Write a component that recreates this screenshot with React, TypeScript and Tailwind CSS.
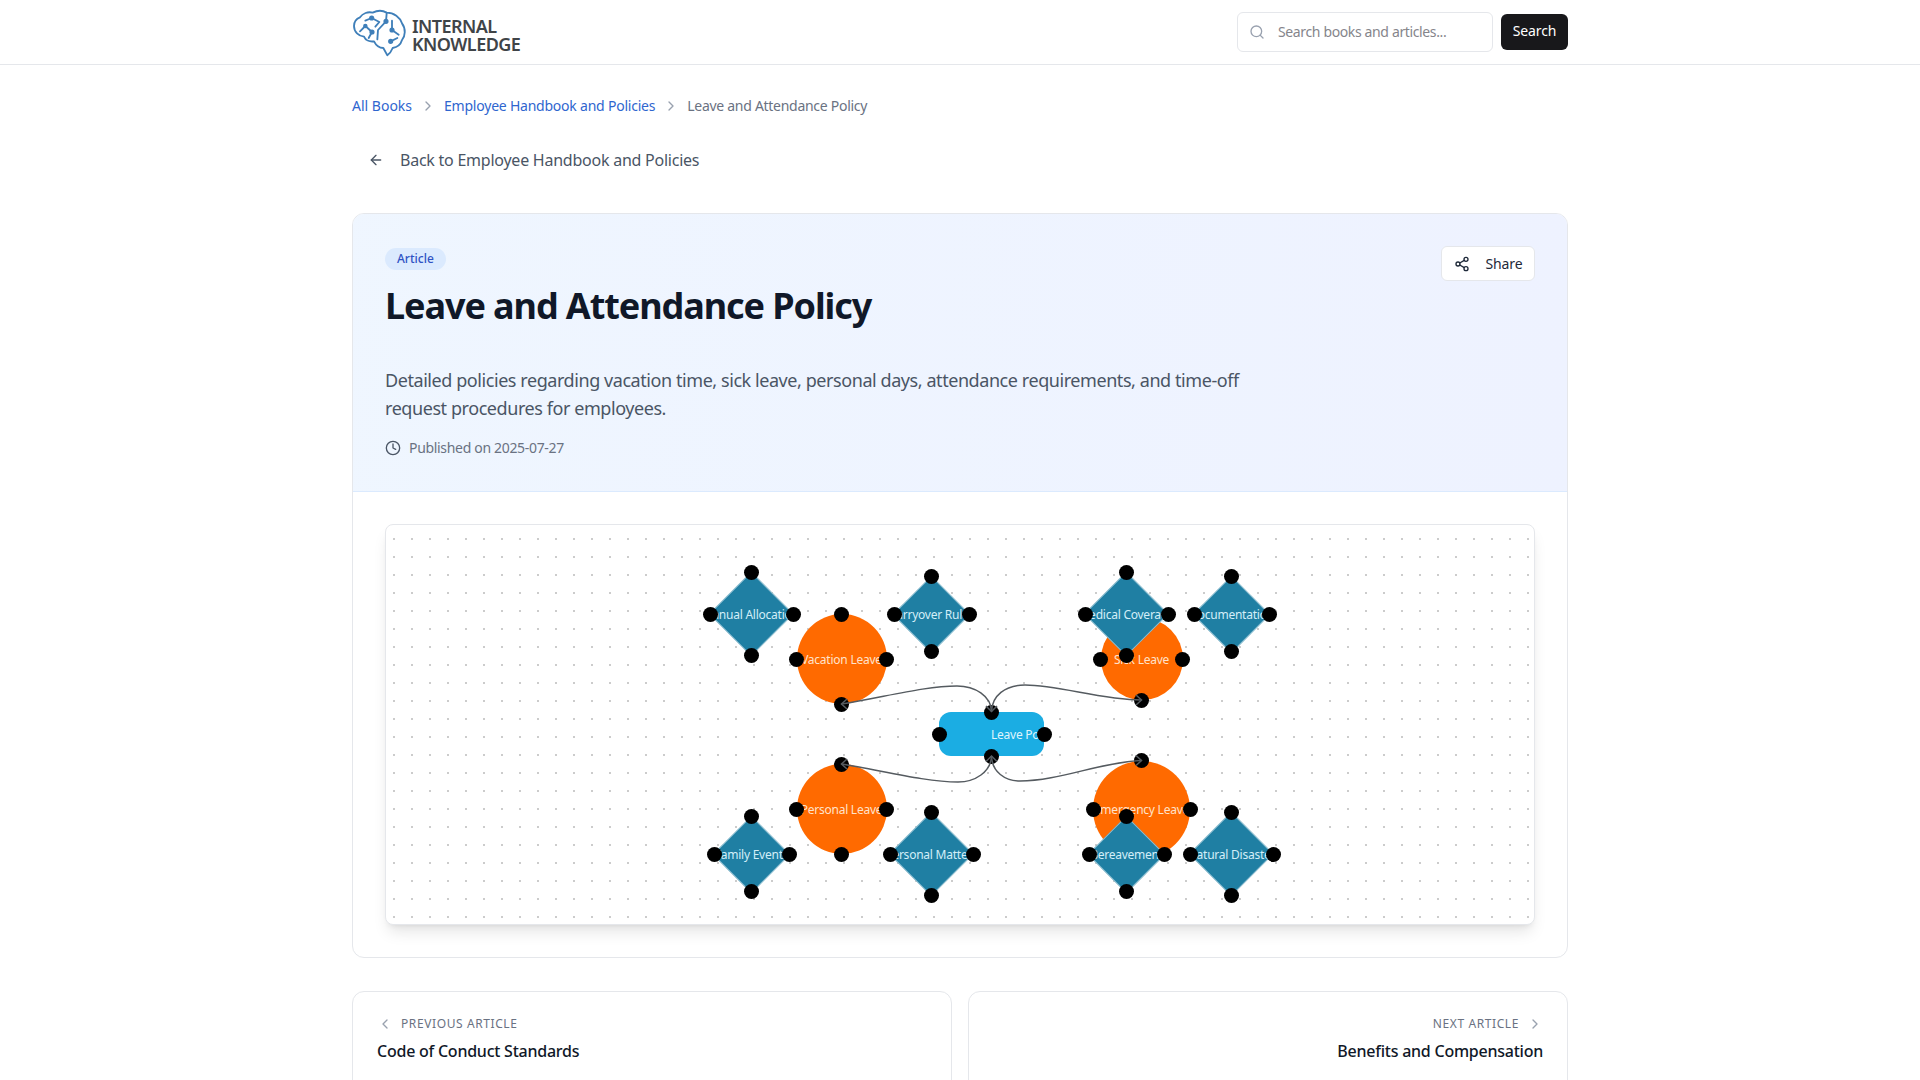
import { ArrowLeft, ChevronLeft, ChevronRight, Clock, Search, Share2 } from 'lucide-react'

const ORIGIN_X = 386
const ORIGIN_Y = 525

type FlowNode = { label: string; cx: number; cy: number; w: number; h: number }

const circles: FlowNode[] = [
  { label: 'Vacation Leave', cx: 841.5, cy: 659, w: 90, h: 90 },
  { label: 'Sick Leave', cx: 1141.5, cy: 659, w: 82, h: 82 },
  { label: 'Personal Leave', cx: 841.5, cy: 809, w: 90, h: 90 },
  { label: 'Emergency Leave', cx: 1141.5, cy: 809, w: 97, h: 97 },
]

const diamonds: FlowNode[] = [
  { label: 'Annual Allocation', cx: 751.5, cy: 614, w: 83, h: 83 },
  { label: 'Carryover Rules', cx: 931.5, cy: 614, w: 75, h: 75 },
  { label: 'Medical Coverage', cx: 1126.5, cy: 614, w: 83, h: 83 },
  { label: 'Documentation', cx: 1231.5, cy: 614, w: 75, h: 75 },
  { label: 'Family Events', cx: 751.5, cy: 854, w: 75, h: 75 },
  { label: 'Personal Matters', cx: 931.5, cy: 854, w: 83, h: 83 },
  { label: 'Bereavement', cx: 1126.5, cy: 854, w: 75, h: 75 },
  { label: 'Natural Disaster', cx: 1231.5, cy: 854, w: 83, h: 83 },
]

const policy: FlowNode = { label: 'Leave Policy', cx: 991.5, cy: 734, w: 105, h: 44 }

function boxStyle(n: FlowNode) {
  return {
    left: n.cx - n.w / 2 - ORIGIN_X,
    top: n.cy - n.h / 2 - ORIGIN_Y,
    width: n.w,
    height: n.h,
  }
}

function Handles({ node }: { node: FlowNode }) {
  const points = [
    { x: node.w / 2, y: 0 },
    { x: 0, y: node.h / 2 },
    { x: node.w, y: node.h / 2 },
    { x: node.w / 2, y: node.h },
  ]
  return (
    <>
      {points.map((p) => (
        <span
          key={`${p.x}-${p.y}`}
          className="absolute w-[15px] h-[15px] rounded-full bg-black"
          style={{ left: p.x - 7.5, top: p.y - 7.5 }}
        />
      ))}
    </>
  )
}

function LeaveDiagram() {
  const shift = (x: number, y: number) => `${x - ORIGIN_X} ${y - ORIGIN_Y}`
  return (
    <div className="relative h-[401px] rounded-lg border border-gray-200 shadow-lg overflow-hidden bg-white bg-[radial-gradient(#cccccc_0.9px,transparent_1.1px)] bg-[size:18px_18px] bg-[position:-1px_5px]">
      {circles.map((n) => (
        <div key={n.label} className="absolute" style={boxStyle(n)}>
          <div className="w-full h-full rounded-full bg-[#ff6a00] overflow-hidden flex items-center justify-center pt-[2px]">
            <span className="text-xs tracking-[-0.02em] whitespace-nowrap text-[#ffe3cc]">{n.label}</span>
          </div>
          <Handles node={n} />
        </div>
      ))}

      <div className="absolute" style={boxStyle(policy)}>
        <div className="w-full h-full rounded-xl bg-[#1badE3] overflow-hidden flex items-center pl-[52px] pt-[2px]">
          <span className="text-xs tracking-[-0.02em] whitespace-nowrap text-[#dff4fc]">{policy.label}</span>
        </div>
        <Handles node={policy} />
      </div>

      {diamonds.map((n) => (
        <div key={n.label} className="absolute" style={boxStyle(n)}>
          <div className="absolute inset-0 flex items-center justify-center">
            <div
              className="rotate-45 shrink-0 bg-[#1f7fa3] border border-white/50"
              style={{ width: (n.w + 2.5) / Math.SQRT2, height: (n.h + 2.5) / Math.SQRT2 }}
            />
          </div>
          <div className="absolute inset-0 overflow-hidden flex items-center justify-center pt-[2px]">
            <span className="text-xs tracking-[-0.02em] whitespace-nowrap text-[#d3eef8]">{n.label}</span>
          </div>
          <Handles node={n} />
        </div>
      ))}

      <svg className="absolute inset-0 w-full h-full pointer-events-none" fill="none" stroke="#555b60" strokeWidth="1.5">
        <path d={`M${shift(841.5, 704)} C${shift(885, 697)} ${shift(925, 686)} ${shift(957, 686)} C${shift(975, 686)} ${shift(991, 696)} ${shift(991.5, 711.5)}`} />
        <path d={`M${shift(991.5, 711.5)} C${shift(992, 696)} ${shift(1005, 685)} ${shift(1025, 685)} C${shift(1060, 685)} ${shift(1100, 700)} ${shift(1141.5, 700)}`} />
        <path d={`M${shift(841.5, 764)} C${shift(880, 770)} ${shift(925, 782)} ${shift(958, 782)} C${shift(975, 782)} ${shift(991, 772)} ${shift(991.5, 756)}`} />
        <path d={`M${shift(991.5, 756)} C${shift(992, 772)} ${shift(1005, 781)} ${shift(1020, 781)} C${shift(1060, 781)} ${shift(1100, 762)} ${shift(1141.5, 760.5)}`} />
        {/* arrow heads */}
        <path d={`M${shift(847, 699)} L${shift(841.5, 704)} L${shift(847, 709)}`} />
        <path d={`M${shift(986, 706)} L${shift(991.5, 711.5)} L${shift(997, 706)}`} />
        <path d={`M${shift(1136, 695)} L${shift(1141.5, 700)} L${shift(1136, 705)}`} />
        <path d={`M${shift(847, 759)} L${shift(841.5, 764)} L${shift(847, 769)}`} />
        <path d={`M${shift(986, 761.5)} L${shift(991.5, 756)} L${shift(997, 761.5)}`} />
        <path d={`M${shift(1136, 755.5)} L${shift(1141.5, 760.5)} L${shift(1136, 765.5)}`} />
      </svg>
    </div>
  )
}

function BrainLogo() {
  return (
    <svg viewBox="0 0 180 162" className="w-[60px] h-[54px] shrink-0 -ml-[2px] mt-[2px]" fill="none" stroke="#3f7fb9" strokeWidth="5.5" strokeLinecap="round" strokeLinejoin="round">
      <path d="M112 148 L100 126 C88 126 78 118 72 106 C58 108 46 102 42 92 C26 90 12 78 12 60 C12 46 20 38 30 34 C38 22 54 16 68 20 C82 13 98 13 110 20 C132 20 150 34 156 52 C168 68 166 90 156 102 C152 116 140 124 128 126 C124 136 118 144 112 148 Z" />
      <path d="M30 76 L46 60 L66 78 L56 96" />
      <path d="M46 44 L65 36 L88 48 L76 62" />
      <path d="M110 22 L108 46 L84 72 L82 100" />
      <path d="M126 44 L126 72 L146 86" />
      <path d="M122 106 L142 96" />
      <circle cx="46" cy="60" r="4" fill="#3f7fb9" />
      <circle cx="66" cy="78" r="5" fill="#3f7fb9" />
      <circle cx="65" cy="36" r="5" fill="#3f7fb9" />
      <circle cx="108" cy="46" r="5" fill="#3f7fb9" />
      <circle cx="126" cy="72" r="5" fill="#3f7fb9" />
      <circle cx="122" cy="106" r="5" fill="#3f7fb9" />
    </svg>
  )
}

export default function App() {
  return (
    <div className="h-screen overflow-hidden bg-white text-gray-900 font-['Noto_Sans',sans-serif]">
      <header className="h-[65px] border-b border-gray-200">
        <div className="w-[1216px] mx-auto h-full flex items-center justify-between">
          <div className="flex items-center gap-[2px]">
            <BrainLogo />
            <div className="text-[18px] leading-[18px] tracking-[-0.55px] font-semibold text-[#3f4448] pt-[5px]">
              <div>INTERNAL</div>
              <div>KNOWLEDGE</div>
            </div>
          </div>
          <div className="flex items-center gap-2">
            <div className="w-[256px] h-10 rounded-md border border-gray-200 flex items-center pl-[11px] gap-[13px]">
              <Search className="w-4 h-4 text-gray-400" />
              <span className="text-sm tracking-[-0.026em] text-[#85858b]">Search books and articles...</span>
            </div>
            <button className="w-[67px] h-9 pb-[2px] rounded-md bg-[#18181b] text-white text-sm font-normal tracking-[-0.01em]">Search</button>
          </div>
        </div>
      </header>

      <main className="w-[1216px] mx-auto pt-[31px]">
        <nav className="flex items-center gap-2 text-sm h-5 mb-[24px]">
          <span className="text-[#2f66cf]">All Books</span>
          <ChevronRight className="w-4 h-4 text-gray-400" />
          <span className="text-[#2f66cf] tracking-[-0.016em]">Employee Handbook and Policies</span>
          <ChevronRight className="w-4 h-4 text-gray-400" />
          <span className="text-gray-500 tracking-[-0.02em]">Leave and Attendance Policy</span>
        </nav>

        <div className="flex items-center gap-4 px-4 h-10 mb-[33px] text-gray-600">
          <ArrowLeft className="w-4 h-4" />
          <span className="text-base tracking-[-0.015em]">Back to Employee Handbook and Policies</span>
        </div>

        <article className="rounded-xl border border-gray-200 overflow-hidden">
          <div className="relative h-[278px] p-8 pt-[34px] border-b border-blue-100 bg-gradient-to-r from-blue-50 to-indigo-50">
            <span className="block w-fit rounded-full bg-blue-100 text-[#2f52c4] text-xs font-medium px-3 py-[3px]">Article</span>
            <h1 className="text-4xl font-bold tracking-[-0.03em] text-gray-900 mt-[16px] leading-10">Leave and Attendance Policy</h1>
            <p className="text-lg leading-7 tracking-[-0.024em] text-gray-600 mt-[40px] w-[880px]">
              Detailed policies regarding vacation time, sick leave, personal days, attendance requirements, and time-off request procedures for employees.
            </p>
            <div className="flex items-center gap-2 mt-[16px] text-sm tracking-[-0.023em] text-gray-500">
              <Clock className="w-4 h-4 text-gray-600" />
              <span>Published on 2025-07-27</span>
            </div>
            <button className="absolute top-8 right-8 w-[94px] h-[35px] rounded-md bg-white border border-gray-200 flex items-center justify-center gap-4 text-sm font-normal tracking-[-0.01em] text-gray-800">
              <Share2 className="w-4 h-4" />
              Share
            </button>
          </div>
          <div className="p-8">
            <LeaveDiagram />
          </div>
        </article>

        <div className="grid grid-cols-2 gap-4 mt-[33px]">
          <div className="h-[120px] rounded-xl border border-gray-200 p-6">
            <div className="flex items-center gap-2 text-xs tracking-[0.05em] uppercase text-gray-500">
              <ChevronLeft className="w-4 h-4 text-gray-400" />
              Previous Article
            </div>
            <div className="mt-[7px] text-base font-medium tracking-[-0.015em] text-gray-900">Code of Conduct Standards</div>
          </div>
          <div className="h-[120px] rounded-xl border border-gray-200 p-6 text-right">
            <div className="flex items-center justify-end gap-2 text-xs tracking-[0.05em] uppercase text-gray-500">
              Next Article
              <ChevronRight className="w-4 h-4 text-gray-400" />
            </div>
            <div className="mt-[7px] text-base font-medium tracking-[-0.015em] text-gray-900">Benefits and Compensation</div>
          </div>
        </div>
      </main>
    </div>
  )
}
